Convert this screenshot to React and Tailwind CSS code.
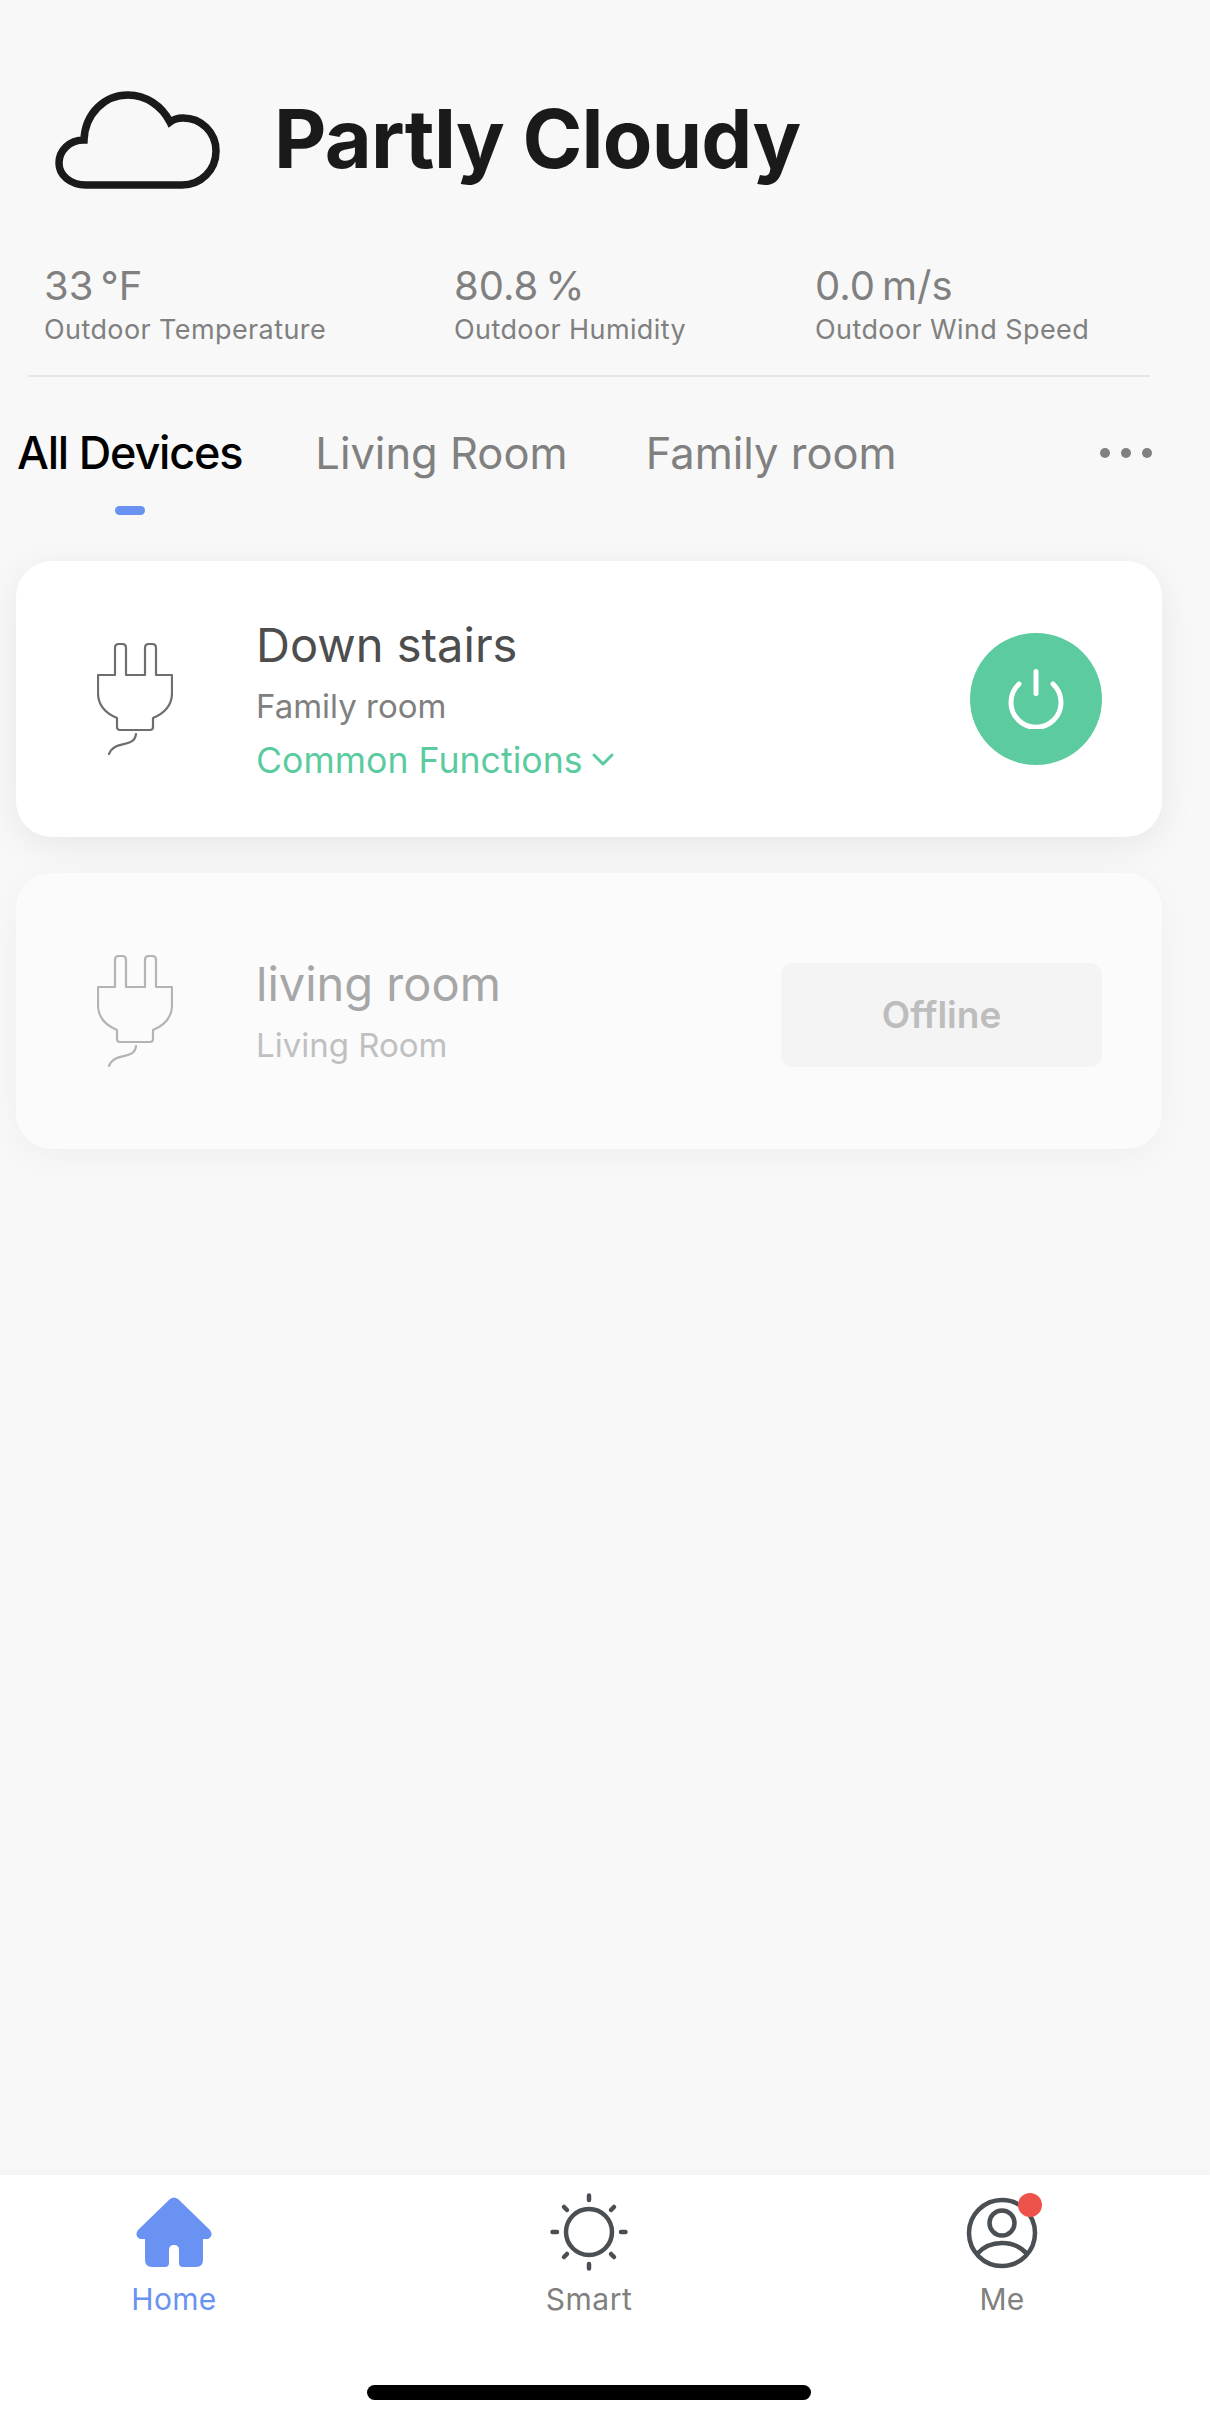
import React from 'react';

const PlugIcon = ({ stroke }) => (
  <svg width="76" height="112" viewBox="0 0 76 112" fill="none" stroke={stroke} strokeWidth="2.2" strokeLinejoin="round" strokeLinecap="round" className="shrink-0">
    <path d="M1 32H18V5Q18 1 22 1H25Q29 1 29 5V32H48V5Q48 1 52 1H55Q59 1 59 5V32H75V50C75 62 68 70 56 75V84Q56 87 53 87H23Q20 87 20 84V75C8 70 1 62 1 50Z" />
    <path d="M39 91C37 106 18 96 12 111" />
  </svg>
);

const PowerIcon = () => (
  <svg width="56" height="60" viewBox="0 0 56 60" fill="none" stroke="#fff" strokeWidth="5" strokeLinecap="round">
    <path d="M28 2.5V24.5" />
    <path d="M11 15A25 25 0 1 0 45 15" />
  </svg>
);

const Stat = ({ value, unit, label, className }) => (
  <div className={className}>
    <div className="text-[40px] leading-[48px] text-[#808080]">
      {value}
      <span className="ml-[7px]">{unit}</span>
    </div>
    <div className="mt-[4px] text-[27px] leading-[32px] tracking-[0.4px] text-[#808080]">{label}</div>
  </div>
);

export default function App() {
  return (
    <div className="flex h-[2424px] w-[1210px] flex-col bg-[#f8f8f8] font-['Inter',sans-serif]">
      <main className="flex-1">
        <div className="flex items-center pl-[54px] pt-[86px]">
          <svg width="168" height="102" viewBox="0 0 168 102" fill="none" stroke="#1a1a1a" strokeWidth="7.5" className="mt-[3px] shrink-0">
            <path d="M32 96H128C147 96 162 81 162 62C162 43 147 29 129 29C124 29 120 30 116 33C108 17 92 6 74 6C50 6 31 25 30 51C15 51 5 62 5 74C5 86 16 96 32 96Z" />
          </svg>
          <h1 className="ml-[52px] text-[81px] font-bold leading-[100px] tracking-[-0.75px] text-[#1a1a1a]">Partly Cloudy</h1>
        </div>

        <div className="ml-[28px] mr-[60px] mt-[71px] flex h-[115px] border-b-2 border-[#e6e6e6] pl-[16px]">
          <Stat value="33" unit="°F" label="Outdoor Temperature" className="w-[410px]" />
          <Stat value="80.8" unit="%" label="Outdoor Humidity" className="w-[361px]" />
          <Stat value="0.0" unit="m/s" label="Outdoor Wind Speed" />
        </div>

        <div className="relative mt-[46px] flex h-[60px] items-center pl-[17px] text-[43.5px] leading-[60px]">
          <div className="relative text-[45px] font-medium tracking-[-1.2px] text-black">
            All Devices
            <span className="absolute left-[98px] top-[83px] h-[9px] w-[30px] rounded-full bg-[#6a92f2]" />
          </div>
          <div className="ml-[73px] text-[#808080]">Living Room</div>
          <div className="ml-[78px] text-[#808080]">Family room</div>
          <div className="ml-auto mr-[58px] flex gap-[11px]">
            <span className="h-[10px] w-[10px] rounded-full bg-[#808080]" />
            <span className="h-[10px] w-[10px] rounded-full bg-[#808080]" />
            <span className="h-[10px] w-[10px] rounded-full bg-[#808080]" />
          </div>
        </div>

        <div className="mt-[78px] flex flex-col gap-[36px] pl-[16px] pr-[48px]">
          <div className="flex h-[276px] items-center rounded-[36px] bg-white pl-[81px] pr-[60px] shadow-[0_8px_36px_rgba(0,0,0,0.07)]">
            <PlugIcon stroke="#6e6e6e" />
            <div className="ml-[83px] flex-1">
              <div className="text-[47px] leading-[60px] text-[#4d4d4d]">Down stairs</div>
              <div className="mt-[8px] text-[33px] leading-[46px] text-[#808080]">Family room</div>
              <div className="mt-[8px] flex items-center text-[35.7px] leading-[46px] text-[#5bcb9f]">
                Common Functions
                <svg width="24" height="16" viewBox="0 0 24 16" fill="none" stroke="#5bcb9f" strokeWidth="3" strokeLinecap="round" strokeLinejoin="round" className="ml-[8px]">
                  <path d="M3 3L12 12L21 3" />
                </svg>
              </div>
            </div>
            <div className="flex h-[132px] w-[132px] items-center justify-center rounded-full bg-[#5dcba0]">
              <PowerIcon />
            </div>
          </div>

          <div className="flex h-[276px] items-center rounded-[36px] bg-[#fbfbfb] pl-[81px] pr-[60px] shadow-[0_8px_36px_rgba(0,0,0,0.04)]">
            <PlugIcon stroke="#b4b4b4" />
            <div className="ml-[83px] flex-1">
              <div className="text-[47px] leading-[60px] text-[#a6a6a6]">living room</div>
              <div className="mt-[8px] text-[33px] leading-[46px] text-[#c0c0c0]">Living Room</div>
            </div>
            <div className="mt-[8px] flex h-[104px] w-[321px] items-center justify-center rounded-[12px] bg-[#f4f4f4] text-[37px] font-semibold text-[#bdbdbd]">
              Offline
            </div>
          </div>
        </div>
      </main>

      <nav className="relative h-[249px] bg-white shadow-[0_-2px_10px_rgba(0,0,0,0.03)]">
        <div className="flex pt-[22px]">
          <div className="flex w-[348px] flex-col items-center">
            <svg width="76" height="70" viewBox="0 0 76 70" fill="#6a92f2">
              <path d="M34 2Q38 -1 42 2L74 33Q78 39 72 42H67V63Q67 70 60 70H47Q43 70 43 66V53Q43 48 38 48Q33 48 33 53V66Q33 70 29 70H16Q9 70 9 63V42H4Q-2 39 2 33Z" />
            </svg>
            <span className="mt-[15px] text-[30px] leading-[34px] tracking-[0.3px] text-[#6a92f2]">Home</span>
          </div>
          <div className="ml-[67px] flex w-[348px] flex-col items-center">
            <svg width="78" height="78" viewBox="0 0 78 78" fill="none" stroke="#4a4f54" strokeWidth="4.5" strokeLinecap="round" className="-mt-[4px]">
              <circle cx="39" cy="39" r="23" />
              <path d="M39 2.5V7M39 71V75.5M2.5 39H7M71 39H75.5M14 14L17 17M61 17L64 14M14 64L17 61M61 61L64 64" />
            </svg>
            <span className="mt-[11px] text-[30px] leading-[34px] tracking-[0.5px] text-[#808080]">Smart</span>
          </div>
          <div className="ml-[65px] flex w-[348px] flex-col items-center">
            <div className="relative h-[72px] w-[72px]">
              <svg width="72" height="72" viewBox="0 0 72 72" fill="none" stroke="#4a4f54" strokeWidth="4.5">
                <circle cx="36" cy="36" r="33" />
                <circle cx="36" cy="26" r="12.5" />
                <path d="M11 57C18 49 26 46 36 46C46 46 54 49 61 57" />
              </svg>
              <span className="absolute -top-[4px] right-[-4px] h-[24px] w-[24px] rounded-full bg-[#ee534b]" />
            </div>
            <span className="mt-[13px] text-[30px] leading-[34px] tracking-[0.3px] text-[#808080]">Me</span>
          </div>
        </div>
        <div className="absolute bottom-[24px] left-[367px] h-[15px] w-[444px] rounded-full bg-black" />
      </nav>
    </div>
  );
}
